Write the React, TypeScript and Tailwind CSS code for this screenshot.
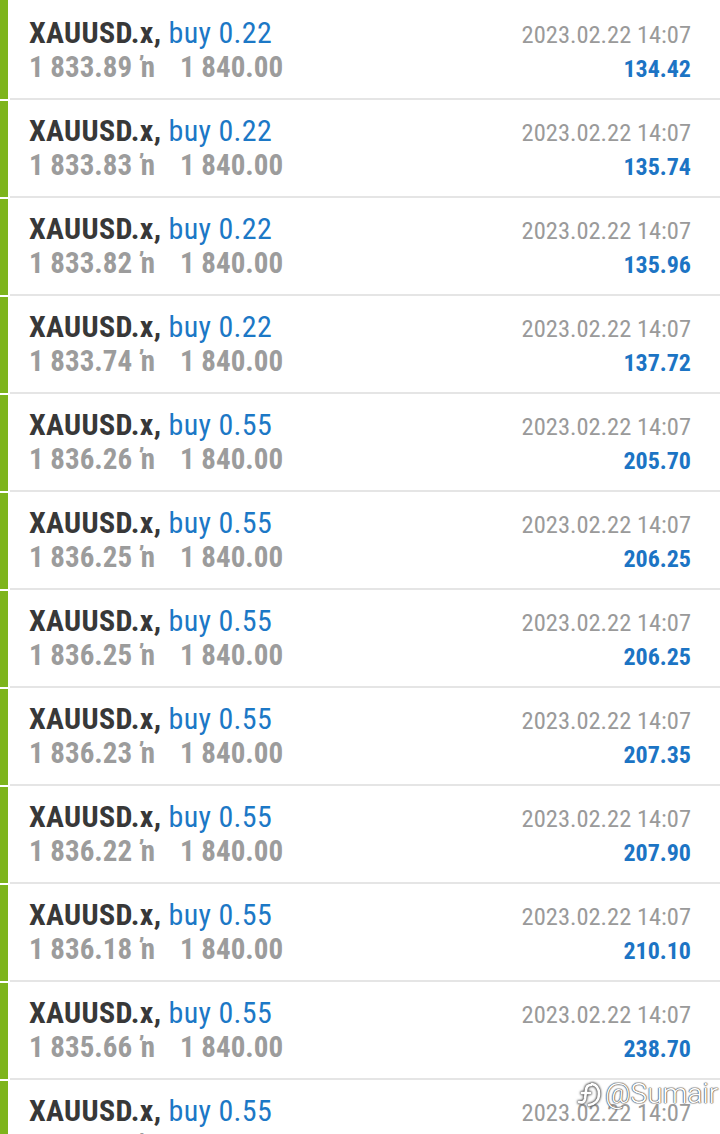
import React from 'react';

const rows = [
  { lot: '0.22', open: '1 833.89', profit: '134.42' },
  { lot: '0.22', open: '1 833.83', profit: '135.74' },
  { lot: '0.22', open: '1 833.82', profit: '135.96' },
  { lot: '0.22', open: '1 833.74', profit: '137.72' },
  { lot: '0.55', open: '1 836.26', profit: '205.70' },
  { lot: '0.55', open: '1 836.25', profit: '206.25' },
  { lot: '0.55', open: '1 836.25', profit: '206.25' },
  { lot: '0.55', open: '1 836.23', profit: '207.35' },
  { lot: '0.55', open: '1 836.22', profit: '207.90' },
  { lot: '0.55', open: '1 836.18', profit: '210.10' },
  { lot: '0.55', open: '1 835.66', profit: '238.70' },
  { lot: '0.55', open: '1 835.63', profit: '239.35' },
];

const TradeRow = ({ lot, open, profit, first }: { lot: string; open: string; profit: string; first: boolean }) => {
  return (
    <div className="flex h-[98px]">
      <div className={first ? 'w-[8px] -mt-[3px] mb-px bg-[#7db41c]' : 'w-[8px] my-px bg-[#7db41c]'} />
      <div className="flex-1 ml-[2px] border-b-2 border-[#e5e5e5] pl-[19px] pr-[29px] pt-[14px]">
        <div className="flex items-baseline justify-between leading-[33px]">
          <div className="text-[30px] tracking-[0.3px]">
            <span className="font-bold text-[#383838]">XAUUSD.x,</span>{' '}
            <span className="text-[#1c78c6]">buy {lot}</span>
          </div>
          <div className="text-[24.5px] text-[#9a9a9a]">2023.02.22 14:07</div>
        </div>
        <div className="flex items-baseline justify-between leading-[33px]">
          <div className="text-[29px] font-bold text-[#9c9c9c]">
            {open} <span className="ml-[2px] mr-[25px]">ŉ</span>1 840.00
          </div>
          <div className="text-[24px] font-bold text-[#1c74c4]">{profit}</div>
        </div>
      </div>
    </div>
  );
};

const App = () => {
  return (
    <div className="relative h-[1134px] overflow-hidden bg-white pt-[2px] font-['Roboto',sans-serif] [font-stretch:condensed]">
      {rows.map((r, i) => (
        <TradeRow key={i} first={i === 0} {...r} />
      ))}
      <div className="absolute left-[576px] top-[1073px] flex items-center gap-[3px] text-[28px] font-light text-white [font-stretch:normal] [text-shadow:0_0_1px_#555,0_0_1px_#555,0_0_1px_#555,0_0_2px_#888]">
        <svg width="26" height="28" viewBox="0 0 26 28" fill="none" stroke="#fff" strokeWidth="2.6" strokeLinecap="round" className="[filter:drop-shadow(0_0_1px_#555)_drop-shadow(0_0_1px_#555)]">
          <path d="M16 4 C21 5 23 9 23 14 C23 20 19 24 13 25" />
          <path d="M15 5 C11 5 10 8 10 11 L9 19 C8.5 22 6 23 3 22" />
          <path d="M6 13 H14" />
        </svg>
        <span>@Sumair</span>
      </div>
    </div>
  );
};

export default App;
